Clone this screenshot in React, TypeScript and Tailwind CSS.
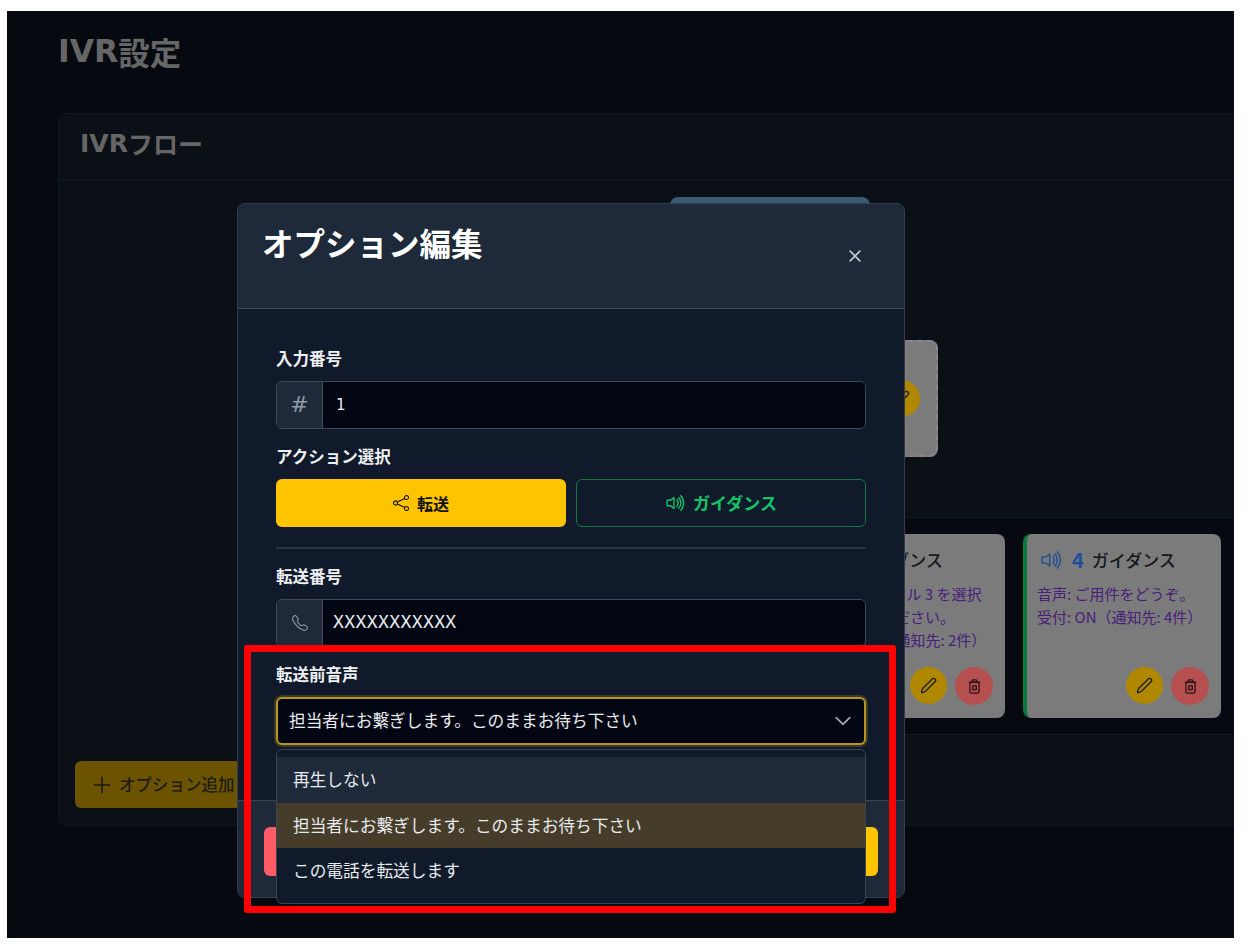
import { BsShare, BsVolumeUp, BsTelephone, BsChevronDown, BsX } from "react-icons/bs";
import { FiPlus } from "react-icons/fi";

const font = { fontFamily: '"Noto Sans CJK JP", "Noto Sans", sans-serif' };
const mono = { fontFamily: '"DejaVu Sans Mono", monospace' };
const dejavu = { fontFamily: '"DejaVu Sans", sans-serif' };

function PencilIcon({ size = 17 }: { size?: number }) {
  return (
    <svg width={size} height={size} viewBox="0 0 24 24" fill="none" stroke="currentColor" strokeWidth="1.8" strokeLinejoin="round">
      <path d="M21.174 6.812a1 1 0 0 0-3.986-3.987L3.842 16.174a2 2 0 0 0-.5.83l-1.321 4.352a.5.5 0 0 0 .623.622l4.353-1.32a2 2 0 0 0 .83-.497z" />
    </svg>
  );
}

function TrashIcon() {
  return (
    <svg width="17" height="17" viewBox="0 0 24 24" fill="none" stroke="currentColor" strokeWidth="1.8" strokeLinejoin="round">
      <path d="M4 6h16" />
      <path d="M8.5 6V4.2a1.5 1.5 0 0 1 1.5-1.5h4a1.5 1.5 0 0 1 1.5 1.5V6" />
      <rect x="5.5" y="6" width="13" height="15.5" rx="2.5" />
      <rect x="9.5" y="11" width="5" height="5.5" />
    </svg>
  );
}

function FlowCard({ num, lines, titleClass }: { num: string; lines: string[]; titleClass: string }) {
  return (
    <div className="flex h-[184px] w-[198px] shrink-0 flex-col rounded-lg border-l-4 border-[#0b7a3c] bg-[#7b7b7b] pl-[10px] pr-[12px] pt-[12px] pb-[13px]">
      <div className={"flex h-[28px] items-center gap-[8px] text-[17px] font-medium text-[#15181c] " + titleClass}>
        <BsVolumeUp className="text-[#23508f]" size={24} />
        <span className="text-[20px] font-bold text-[#1d4f9c]">{num}</span>
        <span>ガイダンス</span>
      </div>
      <div className="mt-[8px] flex-1 whitespace-nowrap text-[15px] leading-[23px] text-[#47207a]">
        {lines.map((l) => (
          <div key={l}>{l}</div>
        ))}
      </div>
      <div className="flex justify-end gap-[8px]">
        <span className="flex h-[37px] w-[37px] items-center justify-center rounded-full bg-[#b08800] text-[#1c1c1c]">
          <PencilIcon />
        </span>
        <span className="flex h-[38px] w-[38px] items-center justify-center rounded-full bg-[#b54f50] text-[#2b1214]">
          <TrashIcon />
        </span>
      </div>
    </div>
  );
}

function InputGroup({ icon, children }: { icon: React.ReactNode; children: React.ReactNode }) {
  return (
    <div className="flex h-[48px] overflow-hidden rounded-[6px] border border-[#3f4a58]">
      <span className="flex w-[46px] items-center justify-center border-r border-[#3f4a58] bg-[#1e2a3a] text-[#8f9aa8]">
        {icon}
      </span>
      <span className="flex flex-1 items-center bg-[#020612] text-[#e8ebee]">{children}</span>
    </div>
  );
}

function Label({ children, className }: { children: React.ReactNode; className?: string }) {
  return (
    <label className={"block h-[24px] text-[16.5px] font-bold leading-[22px] text-[#eef0f2] " + (className ?? "")}>{children}</label>
  );
}

export default function App() {
  return (
    <div className="h-[952px] w-[1248px] overflow-hidden bg-white pl-[7px] pt-[11px]" style={font}>
      <div className="relative h-[927px] w-[1227px] overflow-hidden bg-[#060a10] pl-[51px]">
        {/* dimmed page */}
        <h1 className="flex h-[86px] items-center pb-[4px] text-[31.5px] font-bold text-[#666666]">
          <span style={dejavu}>IVR</span>設定
        </h1>
        <div className="mt-[16px] w-[1190px] rounded-lg border border-[#12171e] bg-[#0b1017]">
          <div className="flex h-[67px] items-center border-b border-[#141a22] pb-[6px] pl-[21px] text-[25px] font-bold text-[#666666]">
            <span style={dejavu}>IVR</span>フロー
          </div>
          <div className="flex flex-col pt-[16px] pb-[17px]">
            <div className="ml-[611px] h-[100px] w-[200px] rounded-lg bg-[#3b5a70]" />
            <div className="ml-[679px] mt-[43px] flex h-[117px] w-[200px] items-center justify-end rounded-lg border-2 border-dashed border-[#8d8494] bg-[#7b7b7b] pr-[16px]">
              <span className="flex h-[37px] w-[37px] items-center justify-center rounded-full bg-[#b08800] text-[#1c1c1c]">
                <PencilIcon />
              </span>
            </div>
            <div className="ml-[641px] mt-[60px] flex h-[218px] justify-end gap-[18px] border-y border-[#141a22] bg-[#060a10] pr-[26px] pt-[16px]">
              <FlowCard num="3" titleClass="-ml-[14px]" lines={["音声:\u00a0\u00a0ダイヤル 3 を選択", "を押してください。", "受付: ON（通知先: 2件）"]} />
              <FlowCard num="4" titleClass="ml-[3px]" lines={["音声: ご用件をどうぞ。", "受付: ON（通知先: 4件）"]} />
            </div>
            <button className="ml-[16px] mt-[26px] flex h-[47px] w-[220px] items-center gap-[4px] rounded-[6px] bg-[#6b5300] pl-[14px] text-[16.5px] font-medium text-[#1c1c14]">
              <FiPlus size={26} strokeWidth={1.5} />
              オプション追加
            </button>
          </div>
        </div>

        {/* modal */}
        <div className="absolute left-[230px] top-[192px] flex h-[695px] w-[668px] flex-col overflow-hidden rounded-lg border border-[#333e4c] bg-[#111a2a]">
          <div className="flex h-[105px] shrink-0 justify-between border-b border-[#414c5a] bg-[#1e2a3a] pl-[24px] pr-[36px] pt-[15px]">
            <h2 className="text-[31.5px] font-bold leading-[46px] text-white">オプション編集</h2>
            <BsX className="mt-[24px] text-[#c5c9ce]" size={26} />
          </div>
          <div className="flex-1 px-[38px] pt-[38px]">
            <Label>入力番号</Label>
            <div className="mt-[10px]">
              <InputGroup icon={<span style={dejavu} className="text-[22px] leading-none">#</span>}>
                <span style={dejavu} className="pl-[13px] text-[15px]">1</span>
              </InputGroup>
            </div>
            <Label className="mt-[16px]">アクション選択</Label>
            <div className="mt-[10px] grid grid-cols-2 gap-[10px]">
              <button className="flex h-[48px] items-center justify-center gap-[8px] rounded-[6px] bg-[#ffc400] text-[16px] font-bold text-[#111111]">
                <BsShare size={16} />
                転送
              </button>
              <button className="flex h-[48px] items-center justify-center gap-[6px] rounded-[6px] border border-[#0b7a3c] text-[17px] font-bold text-[#12c466]">
                <BsVolumeUp size={22} />
                ガイダンス
              </button>
            </div>
            <hr className="mt-[20px] border-t-2 border-[#2a3442]" />
            <Label className="mt-[16px]">転送番号</Label>
            <div className="mt-[10px]">
              <InputGroup icon={<BsTelephone size={16} />}>
                <span style={mono} className="pb-[3px] pl-[10px] text-[18px] tracking-[0.4px]">XXXXXXXXXXX</span>
              </InputGroup>
            </div>
            <Label className="mt-[16px]">転送前音声</Label>
            <div className="mt-[10px] flex h-[48px] items-center justify-between rounded-[6px] border-2 border-[#b8961f] bg-[#020612] pl-[11px] pr-[12px] text-[16.7px] text-[#e8ebee] shadow-[0_0_0_2px_#3a3a2a]">
              担当者にお繫ぎします。このままお待ち下さい
              <BsChevronDown className="text-[#b5bac0]" size={18} strokeWidth={0.6} />
            </div>
          </div>
          <div className="flex h-[97px] shrink-0 items-center justify-between border-t border-[#3a4452] bg-[#1e2a3a] pl-[26px] pr-[26px] pt-[4px]">
            <span className="h-[49px] w-[120px] rounded-[6px] bg-[#ff5c68]" />
            <span className="h-[49px] w-[120px] rounded-[6px] bg-[#ffc400]" />
          </div>
        </div>

        {/* dropdown */}
        <div className="absolute left-[269px] top-[738px] w-[590px] overflow-hidden rounded-[6px] border border-[#3a4452] bg-[#111a2a] pb-[10px] pt-[7px] text-[16.7px] text-[#e8ebee]">
          <div className="flex h-[46px] items-center bg-[#1e2a3a] pl-[16px]">再生しない</div>
          <div className="flex h-[45px] items-center bg-[#453d2a] pl-[16px]">担当者にお繫ぎします。このままお待ち下さい</div>
          <div className="flex h-[45px] items-center pl-[16px]">この電話を転送します</div>
        </div>

        {/* highlight */}
        <div className="absolute left-[237px] top-[634px] h-[268px] w-[652px] rounded-[3px] border-[7px] border-[#ff0000]" />
      </div>
    </div>
  );
}
